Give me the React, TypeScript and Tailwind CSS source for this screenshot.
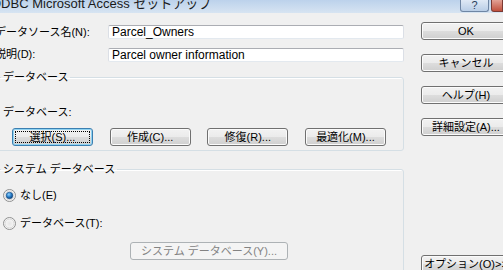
import type { ReactNode } from "react";

const FONT = "font-['Liberation_Sans','Noto_Sans_CJK_JP',sans-serif]";

function Btn({
  children,
  className = "",
  focused = false,
  disabled = false,
}: {
  children: ReactNode;
  className?: string;
  focused?: boolean;
  disabled?: boolean;
}) {
  const look = disabled
    ? "border-[#adb2b5] bg-[#f4f4f4] text-[#838383]"
    : focused
    ? "border-[#3c7fb1] bg-[linear-gradient(#f2f2f2_0%,#ebebeb_50%,#dddddd_51%,#cfcfcf_100%)] shadow-[inset_0_0_0_1px_#8fd3f2] text-black"
    : "border-[#707070] bg-[linear-gradient(#f2f2f2_0%,#ebebeb_50%,#dddddd_51%,#cfcfcf_100%)] shadow-[inset_0_0_0_1px_#fbfbfb] text-black";
  return (
    <div
      className={`flex h-[18px] shrink-0 items-stretch rounded-[3px] border text-[11px] leading-[12px] whitespace-nowrap ${look} ${className}`}
    >
      {focused ? (
        <div className="m-[2px] flex flex-1 items-center justify-center border border-dotted border-black">
          {children}
        </div>
      ) : (
        <div className="flex flex-1 items-center justify-center">{children}</div>
      )}
    </div>
  );
}

function Radio({ checked, id }: { checked?: boolean; id: string }) {
  return (
    <svg width="13" height="13" viewBox="0 0 13 13" className="shrink-0">
      <defs>
        <radialGradient id={`${id}-bg`} cx="50%" cy="50%" r="60%">
          <stop offset="0%" stopColor="#e6e6e6" />
          <stop offset="100%" stopColor="#ffffff" />
        </radialGradient>
        <radialGradient id={`${id}-dot`} cx="40%" cy="35%" r="65%">
          <stop offset="0%" stopColor="#8ed2ff" />
          <stop offset="55%" stopColor="#2a7fc9" />
          <stop offset="100%" stopColor="#0a3f7a" />
        </radialGradient>
      </defs>
      <circle cx="6.5" cy="6.5" r="6" fill={`url(#${id}-bg)`} stroke="#8e8f8f" />
      <circle cx="6.5" cy="6.5" r="4.5" fill="none" stroke="#d8d8d8" />
      {checked && <circle cx="6.5" cy="6.5" r="3.3" fill={`url(#${id}-dot)`} stroke="#1a4f85" strokeWidth="0.6" />}
    </svg>
  );
}

function TitleBar() {
  return (
    <div className="flex h-[13px] items-start overflow-hidden bg-[linear-gradient(#bcd2eb,#d7e4f2)]">
      <div className="-ml-[9px] -mt-[4px] text-[13px] leading-[16px] whitespace-nowrap text-[#1a1a1a]">
        ODBC Microsoft Access セットアップ
      </div>
      <div className="ml-auto flex gap-[2px]">
        <div className="flex h-[12px] w-[29px] items-center justify-center rounded-b-[3px] border border-t-0 border-[#6f86a4] bg-[linear-gradient(#dfe9f5,#b9cde6)] text-[11px] leading-none text-[#2b3f5c]">
          ?
        </div>
        <div className="h-[12px] w-[12px] rounded-bl-[3px] border border-t-0 border-[#7c3a33] bg-[linear-gradient(#e2a195,#c1503d)]" />
      </div>
    </div>
  );
}

function Input({ value }: { value: string }) {
  return (
    <div className="flex flex-1 items-center rounded-[2px] border border-[#abadb3] border-x-[#dbdfe6] border-b-[#e3e9ef] bg-white px-[3px] text-[12px] leading-none text-black">
      {value}
    </div>
  );
}

export default function App() {
  return (
    <div className={`relative h-[270px] w-[503px] overflow-hidden bg-[#f0f0f0] ${FONT}`}>
      <TitleBar />
      <div className="flex">
        <div className="-ml-[7px] w-[411px] shrink-0 text-[11px] leading-[13px] text-black">
          <div className="mt-[10px] flex h-[18px] items-center">
            <span className="w-[115px] shrink-0 pl-[2px] whitespace-nowrap">データソース名(N):</span>
            <Input value="Parcel_Owners" />
          </div>
          <div className="mt-[5px] flex h-[17px] items-center">
            <span className="w-[115px] shrink-0 pl-[2px] whitespace-nowrap">説明(D):</span>
            <Input value="Parcel owner information" />
          </div>

          <fieldset className="mt-[8px] rounded-[3px] border border-[#d5dfe5] shadow-[inset_1px_1px_0_#ffffff]">
            <legend className="ml-[7px] px-[2px] leading-[13px]">データベース</legend>
            <div className="mt-[22px] pl-[9px] leading-[13px]">データベース:</div>
            <div className="mt-[9px] mb-[4px] ml-[18px] flex w-[374px] justify-between">
              <Btn focused className="w-[81px]">選択(S)...</Btn>
              <Btn className="w-[81px]">作成(C)...</Btn>
              <Btn className="w-[81px]">修復(R)...</Btn>
              <Btn className="w-[81px]">最適化(M)...</Btn>
            </div>
          </fieldset>

          <fieldset className="mt-[12px] h-[140px] rounded-[3px] border border-[#d5dfe5] shadow-[inset_1px_1px_0_#ffffff]">
            <legend className="ml-[7px] px-[2px] leading-[13px]">システム データベース</legend>
            <div className="mt-[13px] flex h-[13px] items-center gap-[4px] pl-[9px]">
              <Radio checked id="r1" />
              <span>なし(E)</span>
            </div>
            <div className="mt-[15px] flex h-[13px] items-center gap-[4px] pl-[9px]">
              <Radio id="r2" />
              <span>データベース(T):</span>
            </div>
            <div className="mt-[12px] ml-[136px]">
              <Btn disabled className="w-[158px]">システム データベース(Y)...</Btn>
            </div>
          </fieldset>
        </div>

        <div className="ml-[17px] flex shrink-0 flex-col pt-[9px]">
          <Btn className="w-[90px]">OK</Btn>
          <Btn className="mt-[14px] w-[90px]">キャンセル</Btn>
          <Btn className="mt-[14px] w-[90px]">ヘルプ(H)</Btn>
          <Btn className="mt-[14px] w-[90px]">詳細設定(A)...</Btn>
          <Btn className="mt-[119px] w-[90px]">オプション(O)&gt;&gt;</Btn>
        </div>
      </div>
    </div>
  );
}
